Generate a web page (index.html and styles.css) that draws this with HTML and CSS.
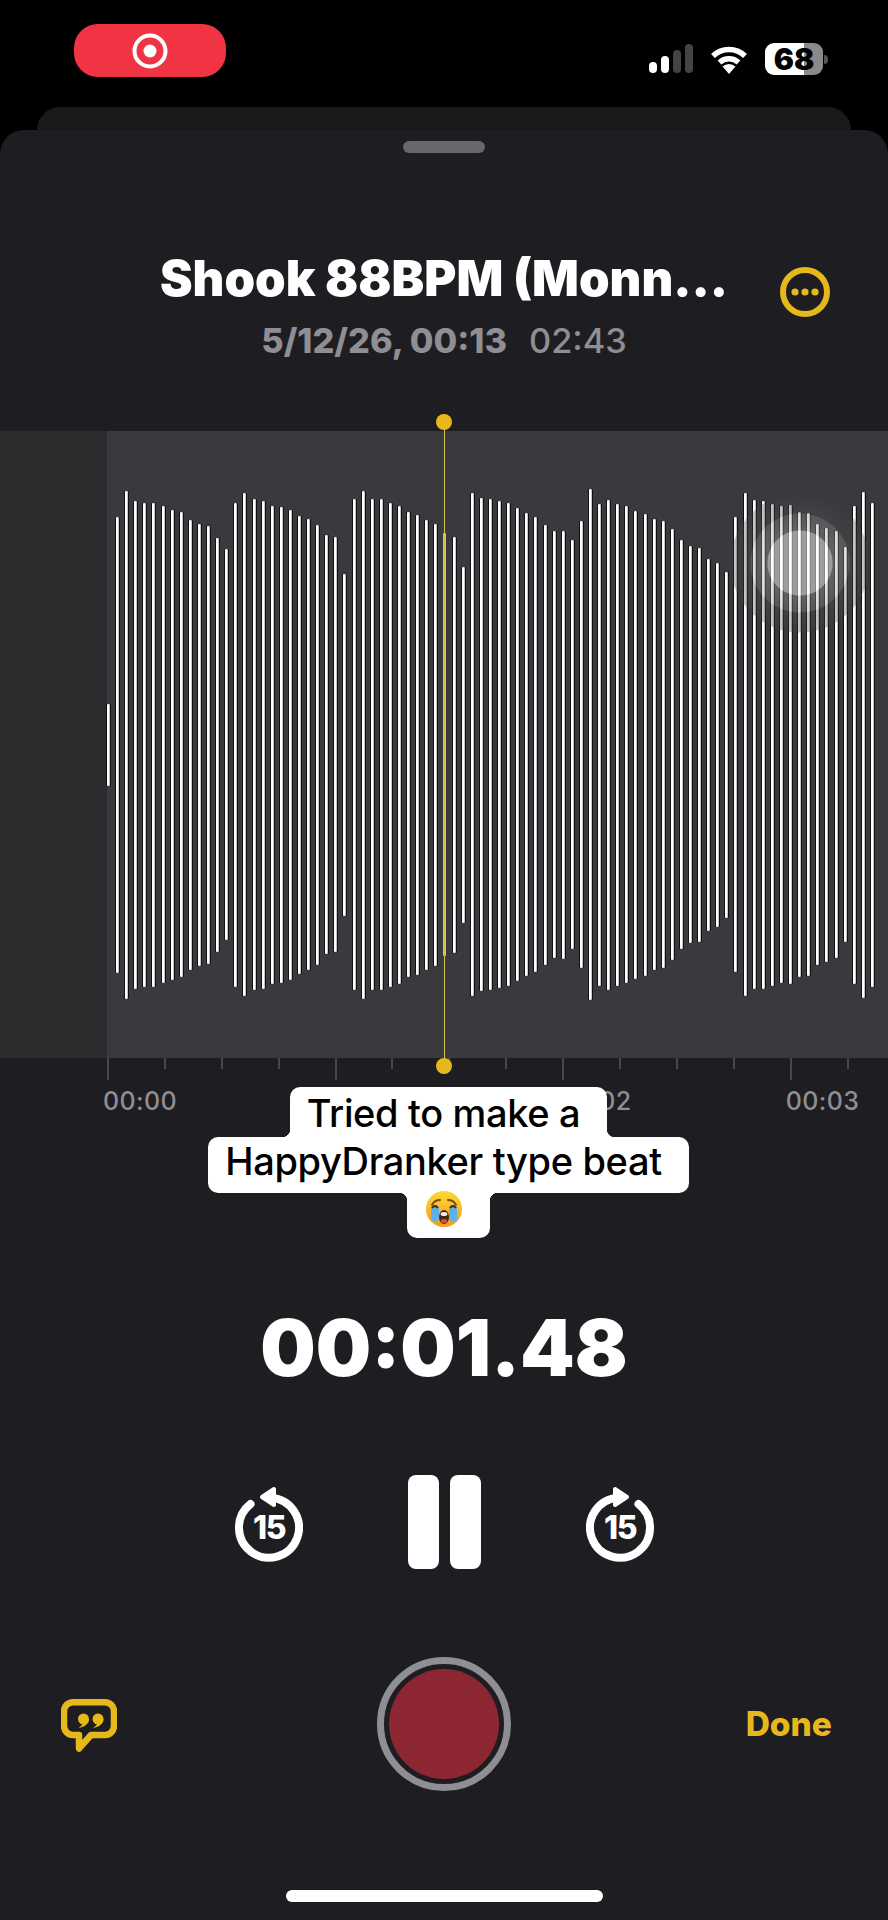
FILE: index.html
```html
<!DOCTYPE html>
<html lang="en">
<head>
    <meta charset="UTF-8">
    <meta name="viewport" content="width=device-width, initial-scale=1.0">
    <title>Voice Memo</title>
    <link rel="stylesheet" href="styles.css">
</head>
<body>
    <!-- Status bar -->
    <header class="status-bar">
        <div class="record-pill">
            <svg width="36" height="38" viewBox="0 0 36 38">
                <circle cx="18" cy="19" r="15.5" fill="none" stroke="#fff" stroke-width="4"></circle>
                <circle cx="18" cy="19" r="6.5" fill="#fff"></circle>
            </svg>
        </div>
        <div class="status-icons">
            <div class="signal">
                <span class="signal-bar signal-1"></span>
                <span class="signal-bar signal-2"></span>
                <span class="signal-bar signal-3"></span>
                <span class="signal-bar signal-4"></span>
            </div>
            <svg class="wifi" width="38" height="30" viewBox="0 0 38 30">
                <path d="M3 12 A23 23 0 0 1 35 12" fill="none" stroke="#fff" stroke-width="5.5"></path>
                <path d="M9.5 18.5 A14 14 0 0 1 28.5 18.5" fill="none" stroke="#fff" stroke-width="5.5"></path>
                <path d="M19 30 L12.5 22.5 A9.5 9.5 0 0 1 25.5 22.5 Z" fill="#fff"></path>
            </svg>
            <div class="battery">68</div>
            <span class="battery-nub"></span>
        </div>
    </header>

    <div class="back-sheet"></div>

    <main class="sheet">
        <div class="handle"></div>

        <!-- Title -->
        <div class="title-row">
            <h1 class="title">Shook 88BPM (Monn...</h1>
            <svg class="more" width="50" height="50" viewBox="0 0 50 50">
                <circle cx="25" cy="25" r="22" fill="none" stroke="#e6b81c" stroke-width="6"></circle>
                <circle cx="15" cy="25" r="3.6" fill="#e6b81c"></circle>
                <circle cx="25" cy="25" r="3.6" fill="#e6b81c"></circle>
                <circle cx="35" cy="25" r="3.6" fill="#e6b81c"></circle>
            </svg>
        </div>
        <p class="meta"><span class="meta-date">5/12/26, 00:13</span><span class="meta-length">02:43</span></p>

        <!-- Waveform -->
        <section class="wave">
            <div class="wave-lead"></div>
            <div class="wave-bars" id="wave-bars"></div>
            <div class="touch"></div>
            <div class="playhead"></div>
        </section>
        <div class="ruler" id="ruler"></div>

        <!-- Caption -->
        <div class="caption">
            <span class="caption-line caption-first">Tried to make a</span>
            <span class="caption-line caption-middle">HappyDranker type beat</span>
            <span class="caption-line caption-last">
                <svg width="38" height="38" viewBox="0 0 38 38" role="img" aria-label="crying face">
                    <defs>
                        <linearGradient id="face" x1="0" y1="0" x2="0" y2="1">
                            <stop offset="0" stop-color="#fdd835"></stop>
                            <stop offset="1" stop-color="#f59a1e"></stop>
                        </linearGradient>
                    </defs>
                    <circle cx="19" cy="19" r="18" fill="url(#face)"></circle>
                    <path d="M7 15 C9 11 12 10 15 10" fill="none" stroke="#7a4a12" stroke-width="1.8" stroke-linecap="round"></path>
                    <path d="M31 15 C29 11 26 10 23 10" fill="none" stroke="#7a4a12" stroke-width="1.8" stroke-linecap="round"></path>
                    <path d="M6 35 V19 Q6 15 10 15 Q14 15 14 19 V29 Q10 33 6 30 Z" fill="#5cb0ec"></path>
                    <path d="M32 30 V19 Q32 15 28 15 Q24 15 24 19 V29 Q28 34 32 30 Z" fill="#5cb0ec"></path>
                    <path d="M7 18 Q10 14 13 18" fill="none" stroke="#4a2c0c" stroke-width="2"></path>
                    <path d="M25 18 Q28 14 31 18" fill="none" stroke="#4a2c0c" stroke-width="2"></path>
                    <ellipse cx="19" cy="27" rx="5" ry="7" fill="#4a2410"></ellipse>
                    <ellipse cx="19" cy="24" rx="3.4" ry="2" fill="#f4efe6"></ellipse>
                    <ellipse cx="19" cy="31" rx="3.2" ry="2" fill="#c8563a"></ellipse>
                </svg>
            </span>
        </div>

        <!-- Elapsed time -->
        <div class="elapsed">00:01.48</div>

        <!-- Transport -->
        <div class="transport">
            <svg class="skip" width="68" height="76" viewBox="0 0 68 76">
                <path d="M15.5 18 A30 30 0 1 0 36 11.7" fill="none" stroke="#fff" stroke-width="8" stroke-linecap="round"></path>
                <path d="M27 11 L39 3 V19 Z" fill="#fff" stroke="#fff" stroke-width="4" stroke-linejoin="round"></path>
                <text class="skip-label" x="34" y="53" text-anchor="middle">15</text>
            </svg>
            <div class="pause">
                <span class="pause-bar"></span>
                <span class="pause-bar"></span>
            </div>
            <svg class="skip" width="68" height="76" viewBox="0 0 68 76">
                <g transform="translate(68) scale(-1 1)">
                    <path d="M15.5 18 A30 30 0 1 0 36 11.7" fill="none" stroke="#fff" stroke-width="8" stroke-linecap="round"></path>
                    <path d="M27 11 L39 3 V19 Z" fill="#fff" stroke="#fff" stroke-width="4" stroke-linejoin="round"></path>
                </g>
                <text class="skip-label" x="34" y="53" text-anchor="middle">15</text>
            </svg>
        </div>

        <!-- Bottom actions -->
        <div class="actions">
            <svg class="transcript" width="56" height="54" viewBox="0 0 56 54">
                <path d="M12 3.25 H44 a9 9 0 0 1 9 9 V27 a9 9 0 0 1 -9 9 H30 L18 49.5 V36 H12 a9 9 0 0 1 -9 -9 V12.25 a9 9 0 0 1 9 -9 Z" fill="none" stroke="#e6b81c" stroke-width="6.5" stroke-linejoin="round"></path>
                <circle cx="22.5" cy="20" r="5.5" fill="#e6b81c"></circle>
                <path d="M28 20 c0 4.5 -4 8 -10.5 9 c3 -2 4.5 -4 5 -6 Z" fill="#e6b81c"></path>
                <circle cx="37" cy="20" r="5.5" fill="#e6b81c"></circle>
                <path d="M42.5 20 c0 4.5 -4 8 -10.5 9 c3 -2 4.5 -4 5 -6 Z" fill="#e6b81c"></path>
            </svg>
            <div class="record-button"><span class="record-dot"></span></div>
            <span class="done">Done</span>
        </div>

        <div class="home-indicator"></div>
    </main>

    <script>
        // Bar heights, left of the playhead, the one under it, then right of it
        const barHeights = [
            82, 456, 508, 488, 484, 484, 477, 470, 465, 450, 442, 438, 414, 391, 484, 503, 491, 488, 478,
            476, 470, 458, 451, 440, 419, 415, 342, 491, 508, 491, 491, 484, 478, 465, 460, 450, 442,
            423,
            416, 356, 503, 493, 491, 487, 483, 473, 463, 455, 440, 427, 428, 409, 447, 511, 482, 490, 482,
            477, 468, 462, 451, 447, 431, 409, 397, 394, 372, 364, 346, 455, 503, 489, 488, 482, 477, 479,
            465, 463, 441, 434, 427, 395, 478, 506, 484
        ];
        const playheadIndex = 37;

        const waveBars = document.getElementById('wave-bars');
        barHeights.forEach(function (height, index) {
            const bar = document.createElement('span');
            bar.classList.add('bar');
            if (index === playheadIndex) {
                bar.classList.add('bar-live');
            }
            bar.style.height = height + 'px';
            waveBars.appendChild(bar);
        });

        // One group per second, four ticks each. The caption covers 00:01 here
        const ruler = document.getElementById('ruler');
        ['00:00', '', '00:02', '00:03'].forEach(function (label) {
            const group = document.createElement('div');
            group.classList.add('ruler-group');
            group.innerHTML = `
                <div class="ticks">
                    <span class="tick tick-major"></span>
                    <span class="tick"></span>
                    <span class="tick"></span>
                    <span class="tick"></span>
                </div>
                <span class="ruler-label">${label}</span>
            `;
            ruler.appendChild(group);
        });
    </script>
</body>
</html>
```

FILE: styles.css
```css
/* Page */
* {
    box-sizing: border-box;
}

body {
    margin: 0;
    width: 888px;
    height: 1920px;
    overflow: hidden;
    background-color: #000;
    font-family: Inter, "Liberation Sans", sans-serif;
    color: #fff;
}

/* Status bar */
.status-bar {
    display: flex;
    justify-content: space-between;
    align-items: flex-start;
    height: 107px;
    padding: 24px 60px 0 74px;
}

.record-pill {
    display: flex;
    align-items: center;
    justify-content: center;
    width: 152px;
    height: 53px;
    border-radius: 24px;
    background-color: #f03444;
}

.status-icons {
    display: flex;
    align-items: flex-start;
    margin-top: 19px;
}

.signal {
    display: flex;
    align-items: flex-end;
    gap: 4px;
    height: 29px;
    margin-top: 1px;
}

.signal-bar {
    width: 8px;
    border-radius: 4px;
    background-color: #444;
}

.signal-1 {
    height: 11px;
    background-color: #fff;
}

.signal-2 {
    height: 17px;
    background-color: #fff;
}

.signal-3 {
    height: 23px;
}

.signal-4 {
    height: 29px;
}

.wifi {
    margin: 1px 0 0 17px;
}

.battery {
    width: 58px;
    height: 32px;
    margin-left: 17px;
    border-radius: 9px;
    background: linear-gradient(90deg, #fff 67%, #8a8a8a 67%);
    color: #000;
    font-size: 30px;
    font-weight: 900;
    line-height: 32px;
    text-align: center;
}

.battery-nub {
    width: 4px;
    height: 9px;
    margin: 12px 0 0 1px;
    border-radius: 0 4px 4px 0;
    background-color: #555;
}

/* Sheets */
.back-sheet {
    height: 23px;
    margin: 0 37px;
    border-radius: 24px 24px 0 0;
    background-color: #1a1a1c;
}

.sheet {
    display: flex;
    flex-direction: column;
    height: 1790px;
    border-radius: 24px 24px 0 0;
    background-color: #1e1d22;
}

.handle {
    align-self: center;
    width: 82px;
    height: 12px;
    margin-top: 11px;
    border-radius: 6px;
    background-color: #68686c;
}

/* Title */
.title-row {
    display: grid;
    grid-template-columns: 1fr auto 1fr;
    margin-top: 98px;
}

.title {
    grid-column: 2;
    margin: 0;
    font-size: 49px;
    font-weight: 900;
    line-height: 56px;
    white-space: nowrap;
}

.more {
    grid-column: 3;
    justify-self: end;
    height: 50px;
    margin: 16px 58px -10px 0;
}

.meta {
    display: flex;
    justify-content: center;
    gap: 22px;
    margin: 14px 0 0;
    color: #8e8e93;
    font-size: 34.3px;
    line-height: 40px;
}

.meta-date {
    font-weight: 800;
}

.meta-length {
    font-weight: 500;
}

/* Waveform */
.wave {
    position: relative;
    display: flex;
    height: 627px;
    margin-top: 70px;
    flex-shrink: 0;
    background-color: #3a3a3e;
}

.wave-lead {
    width: 107px;
    background-color: #2c2c2e;
}

.wave-bars {
    display: flex;
    align-items: center;
    gap: 7.1px;
}

.bar {
    width: 2px;
    border-radius: 1px;
    background-color: #fff;
    box-shadow: 1px 0 0 #c4c4c4, 2px 0 0 rgba(0, 0, 0, 0.7), -1px 0 0 rgba(0, 0, 0, 0.7);
}

.bar-live {
    width: 3px;
    margin-right: -1px;
    background-color: #e6c32c;
    box-shadow: none;
}

.touch {
    position: absolute;
    top: 62px;
    left: 730px;
    width: 140px;
    height: 140px;
    border-radius: 50%;
    background: radial-gradient(circle closest-side,
        rgba(255, 255, 255, 0.5) 0, rgba(255, 255, 255, 0.5) 32px,
        rgba(170, 170, 170, 0.36) 33px, rgba(150, 150, 150, 0.32) 49px,
        rgba(80, 80, 82, 0.35) 50px, rgba(60, 60, 62, 0.3) 69px, rgba(50, 50, 54, 0) 70px);
}

.playhead {
    position: absolute;
    top: -17px;
    bottom: -16px;
    left: 436px;
    width: 16px;
    background: linear-gradient(90deg, transparent 8px, #d9c04a 8px, #d9c04a 9px, transparent 9px);
}

.playhead::before,
.playhead::after {
    content: "";
    position: absolute;
    left: 0;
    width: 16px;
    height: 16px;
    border-radius: 50%;
    background-color: #e6b81c;
}

.playhead::before {
    top: 0;
}

.playhead::after {
    bottom: 0;
}

/* Ruler */
.ruler {
    display: flex;
    height: 58px;
    padding-left: 107px;
    flex-shrink: 0;
    overflow: hidden;
}

.ruler-group {
    display: flex;
    flex-direction: column;
    width: 227.6px;
    flex-shrink: 0;
}

.ticks {
    display: flex;
    height: 22px;
}

.tick {
    width: 56.9px;
    height: 11px;
    flex-shrink: 0;
    background: linear-gradient(90deg, #48484c 2px, transparent 2px);
}

.tick-major {
    height: 22px;
}

.ruler-label {
    margin: 7px 0 0 -4px;
    color: #8e8e93;
    font-size: 25px;
    font-weight: 500;
    line-height: 28px;
    letter-spacing: 0.4px;
}

/* Caption */
.caption {
    position: relative;
    display: flex;
    flex-direction: column;
    align-items: center;
    margin-top: -29px;
    padding-left: 9px;
    color: #000;
    font-size: 38px;
    font-weight: 500;
    line-height: 47px;
    letter-spacing: -0.35px;
}

.caption-line {
    position: relative;
    display: block;
    padding: 0 27px 0 17px;
    background-color: #fff;
    white-space: nowrap;
}

.caption-first {
    height: 50px;
    padding-top: 3px;
    border-radius: 10px 10px 0 0;
}

.caption-middle {
    height: 56px;
    padding-top: 1px;
    border-radius: 10px;
}

.caption-last {
    width: 83px;
    height: 45px;
    padding: 0;
    border-radius: 0 0 10px 10px;
}

.caption-last svg {
    display: block;
    margin: -3px 0 0 18px;
}

/* Concave corners where a short line meets the long one */
.caption-first::before,
.caption-first::after,
.caption-last::before,
.caption-last::after {
    content: "";
    position: absolute;
    width: 8px;
    height: 8px;
}

.caption-first::before {
    left: -8px;
    bottom: 0;
    background: radial-gradient(circle at 0 0, transparent 8px, #fff 8.5px);
}

.caption-first::after {
    right: -8px;
    bottom: 0;
    background: radial-gradient(circle at 100% 0, transparent 8px, #fff 8.5px);
}

.caption-last::before {
    left: -8px;
    top: 0;
    background: radial-gradient(circle at 0 100%, transparent 8px, #fff 8.5px);
}

.caption-last::after {
    right: -8px;
    top: 0;
    background: radial-gradient(circle at 100% 100%, transparent 8px, #fff 8.5px);
}

/* Elapsed time */
.elapsed {
    margin-top: 68px;
    font-size: 78px;
    font-weight: 900;
    line-height: 84px;
    text-align: center;
}

/* Transport */
.transport {
    display: flex;
    justify-content: center;
    align-items: flex-start;
    gap: 105px;
    height: 94px;
    margin-top: 85px;
}

.skip {
    margin-top: 11px;
}

.skip-label {
    fill: #fff;
    font-family: Inter, sans-serif;
    font-size: 32px;
    font-weight: 800;
    letter-spacing: -1.5px;
}

.pause {
    display: flex;
    gap: 11px;
}

.pause-bar {
    width: 31px;
    height: 94px;
    border-radius: 8px;
    background-color: #fff;
}

/* Bottom actions */
.actions {
    display: grid;
    grid-template-columns: 1fr auto 1fr;
    align-items: center;
    margin-top: 88px;
    padding: 0 56px;
}

.transcript {
    margin: 3px 0 0 5px;
}

.record-button {
    display: flex;
    align-items: center;
    justify-content: center;
    width: 134px;
    height: 134px;
    border: 7px solid #8e8e93;
    border-radius: 50%;
}

.record-dot {
    width: 110px;
    height: 110px;
    border-radius: 50%;
    background-color: #8b2632;
}

.done {
    justify-self: end;
    color: #e6b81c;
    font-size: 33.5px;
    font-weight: 800;
}

.home-indicator {
    align-self: center;
    width: 317px;
    height: 12px;
    margin-top: 99px;
    border-radius: 6px;
    background-color: #fff;
}
```
